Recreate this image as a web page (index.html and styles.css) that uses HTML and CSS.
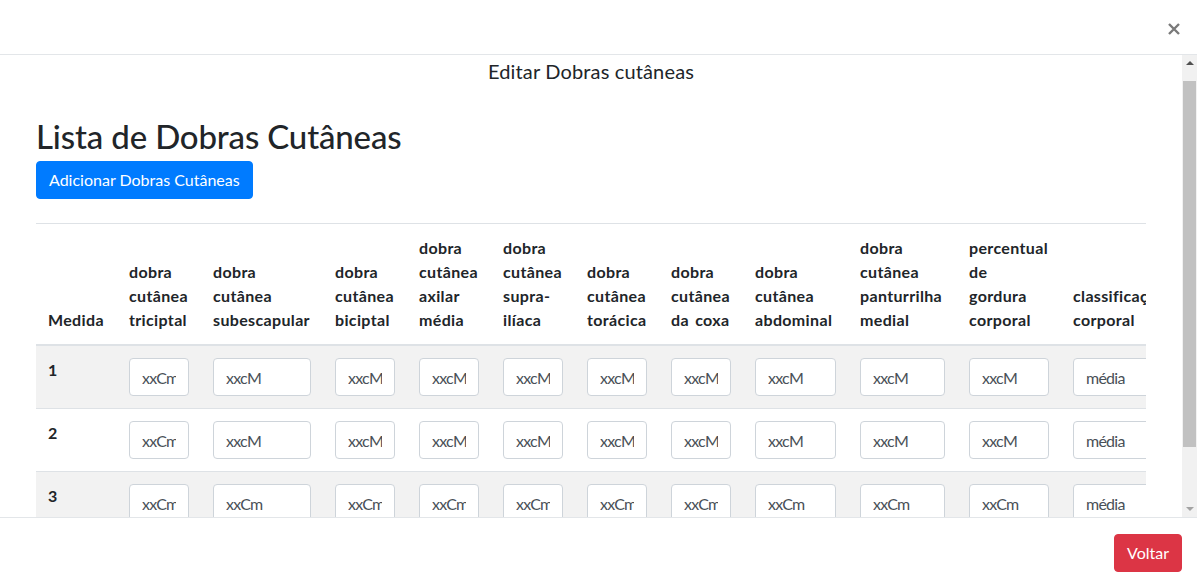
FILE: index.html
```html
<!DOCTYPE html>
<html lang="pt">
<head>
<meta charset="utf-8">
<title>Editar Dobras cutâneas</title>
<link rel="stylesheet" href="styles.css">
</head>
<body>
<div class="modal">
  <header class="modal-header">
    <button class="close" aria-label="Fechar">
      <svg width="12" height="12" viewBox="0 0 12 12"><path d="M1 1L11 11M11 1L1 11" stroke="#7a7a7a" stroke-width="2.4" stroke-linecap="butt"/></svg>
    </button>
  </header>
  <div class="modal-main">
    <div class="modal-body">
      <h5 class="modal-title">Editar Dobras cutâneas</h5>
      <div class="container">
        <h2 class="page-title">Lista de Dobras Cutâneas</h2>
        <button class="btn btn-primary">Adicionar Dobras Cutâneas</button>
        <div class="table-wrap">
          <table class="table">
            <colgroup>
              <col class="c-medida"><col class="c-w84"><col class="c-w122"><col class="c-w84"><col class="c-w84"><col class="c-w84"><col class="c-w84"><col class="c-w84"><col class="c-w105"><col class="c-w109"><col class="c-w104"><col class="c-w129">
            </colgroup>
            <thead>
              <tr>
                <th>Medida</th>
                <th>dobra cutânea triciptal</th>
                <th>dobra cutânea subescapular</th>
                <th>dobra cutânea biciptal</th>
                <th>dobra cutânea axilar média</th>
                <th>dobra cutânea supra-ilíaca</th>
                <th>dobra cutânea torácica</th>
                <th>dobra cutânea da coxa</th>
                <th>dobra cutânea abdominal</th>
                <th>dobra cutânea panturrilha medial</th>
                <th>percentual de gordura corporal</th>
                <th>classificação corporal</th>
              </tr>
            </thead>
            <tbody>
              <tr class="odd">
                <th>1</th>
                <td><input class="form-control" value="xxCm"></td>
                <td><input class="form-control" value="xxcM"></td>
                <td><input class="form-control" value="xxcM"></td>
                <td><input class="form-control" value="xxcM"></td>
                <td><input class="form-control" value="xxcM"></td>
                <td><input class="form-control" value="xxcM"></td>
                <td><input class="form-control" value="xxcM"></td>
                <td><input class="form-control" value="xxcM"></td>
                <td><input class="form-control" value="xxcM"></td>
                <td><input class="form-control" value="xxcM"></td>
                <td><input class="form-control" value="média"></td>
              </tr>
              <tr>
                <th>2</th>
                <td><input class="form-control" value="xxCm"></td>
                <td><input class="form-control" value="xxcM"></td>
                <td><input class="form-control" value="xxcM"></td>
                <td><input class="form-control" value="xxcM"></td>
                <td><input class="form-control" value="xxcM"></td>
                <td><input class="form-control" value="xxcM"></td>
                <td><input class="form-control" value="xxcM"></td>
                <td><input class="form-control" value="xxcM"></td>
                <td><input class="form-control" value="xxcM"></td>
                <td><input class="form-control" value="xxcM"></td>
                <td><input class="form-control" value="média"></td>
              </tr>
              <tr class="odd">
                <th>3</th>
                <td><input class="form-control" value="xxCm"></td>
                <td><input class="form-control" value="xxCm"></td>
                <td><input class="form-control" value="xxCm"></td>
                <td><input class="form-control" value="xxCm"></td>
                <td><input class="form-control" value="xxCm"></td>
                <td><input class="form-control" value="xxCm"></td>
                <td><input class="form-control" value="xxCm"></td>
                <td><input class="form-control" value="xxCm"></td>
                <td><input class="form-control" value="xxCm"></td>
                <td><input class="form-control" value="xxCm"></td>
                <td><input class="form-control" value="média"></td>
              </tr>
            </tbody>
          </table>
        </div>
      </div>
    </div>
    <div class="scrollbar">
      <span class="arrow arrow-up"></span>
      <div class="track"><div class="thumb"></div></div>
      <span class="arrow arrow-down"></span>
    </div>
  </div>
  <footer class="modal-footer">
    <button class="btn btn-danger">Voltar</button>
  </footer>
</div>
</body>
</html>
```

FILE: styles.css
```css
* { box-sizing: border-box; }
html, body { margin: 0; padding: 0; }
body {
  font-family: Lato, "Noto Sans", sans-serif;
  font-size: 16px;
  line-height: 24px;
  color: #212529;
  background: #fff;
  width: 1197px;
  height: 583px;
  overflow: hidden;
}
.modal {
  display: flex;
  flex-direction: column;
  height: 583px;
}
.modal-header {
  height: 55px;
  flex: 0 0 55px;
  border-bottom: 1px solid #e3e6e9;
  display: flex;
  justify-content: flex-end;
  align-items: flex-start;
  padding: 23px 17px 0 0;
}
.close {
  border: 0;
  background: transparent;
  padding: 0;
  width: 12px;
  height: 12px;
  display: block;
  cursor: pointer;
}
.close svg { display: block; }
.modal-main {
  flex: 0 0 462px;
  height: 462px;
  display: flex;
  overflow: hidden;
}
.modal-body {
  flex: 1 1 auto;
  overflow: hidden;
  padding-top: 4px;
}
.modal-title {
  margin: 0;
  font-size: 20px;
  line-height: 24px;
  font-weight: 400;
  letter-spacing: 0.15px;
  text-align: center;
}
.container {
  width: 1140px;
  margin: 0 auto;
  padding: 0 15px;
}
.page-title {
  margin: 34px 0 6px;
  font-size: 33px;
  line-height: 38px;
  font-weight: 500;
  letter-spacing: -0.15px;
}
.btn {
  font-family: inherit;
  font-size: 16px;
  line-height: 24px;
  padding: 6px 12px;
  border: 1px solid transparent;
  border-radius: 4px;
  color: #fff;
  cursor: pointer;
}
.btn-primary { background: #007bff; border-color: #007bff; }
.btn-danger { background: #dc3545; border-color: #dc3545; }
.table-wrap {
  margin-top: 24px;
  width: 1110px;
  overflow: hidden;
}
.table {
  border-collapse: collapse;
  table-layout: fixed;
  width: 1154px;
}
.c-medida { width: 81px; }
.c-w84 { width: 84px; }
.c-w122 { width: 122px; }
.c-w105 { width: 105px; }
.c-w109 { width: 109px; }
.c-w104 { width: 104px; }
.c-w129 { width: 129px; }
.table th, .table td {
  padding: 12px;
  border-top: 1px solid #dee2e6;
  text-align: left;
  vertical-align: top;
}
.table thead th {
  vertical-align: bottom;
  border-bottom: 2px solid #dee2e6;
  font-weight: 700;
  letter-spacing: 0.35px;
  word-spacing: 2px;
}
.table tbody th { font-weight: 700; }
.table tbody tr.odd { background: #f2f2f2; }
.form-control {
  display: block;
  width: 100%;
  height: 38px;
  padding: 6px 12px;
  font-family: inherit;
  font-size: 16px;
  line-height: 24px;
  letter-spacing: -0.75px;
  color: #495057;
  background: #fff;
  border: 1px solid #ced4da;
  border-radius: 4px;
}
.scrollbar {
  flex: 0 0 15px;
  width: 15px;
  background: #f1f1f1;
  display: flex;
  flex-direction: column;
  align-items: center;
}
.arrow {
  display: block;
  width: 0;
  height: 0;
  border-left: 4px solid transparent;
  border-right: 4px solid transparent;
  flex: 0 0 auto;
}
.arrow-up {
  margin-top: 6px;
  border-bottom: 4px solid #505050;
}
.arrow-down {
  margin-top: auto;
  margin-bottom: 6px;
  border-top: 4px solid #a3a3a3;
}
.track {
  width: 100%;
  padding: 16px 1px 0;
}
.thumb {
  width: 13px;
  height: 366px;
  background: #c1c1c1;
}
.modal-footer {
  flex: 1 1 auto;
  border-top: 1px solid #e3e6e9;
  display: flex;
  justify-content: flex-end;
  align-items: flex-start;
  padding: 16px 15px 0 0;
}
```
